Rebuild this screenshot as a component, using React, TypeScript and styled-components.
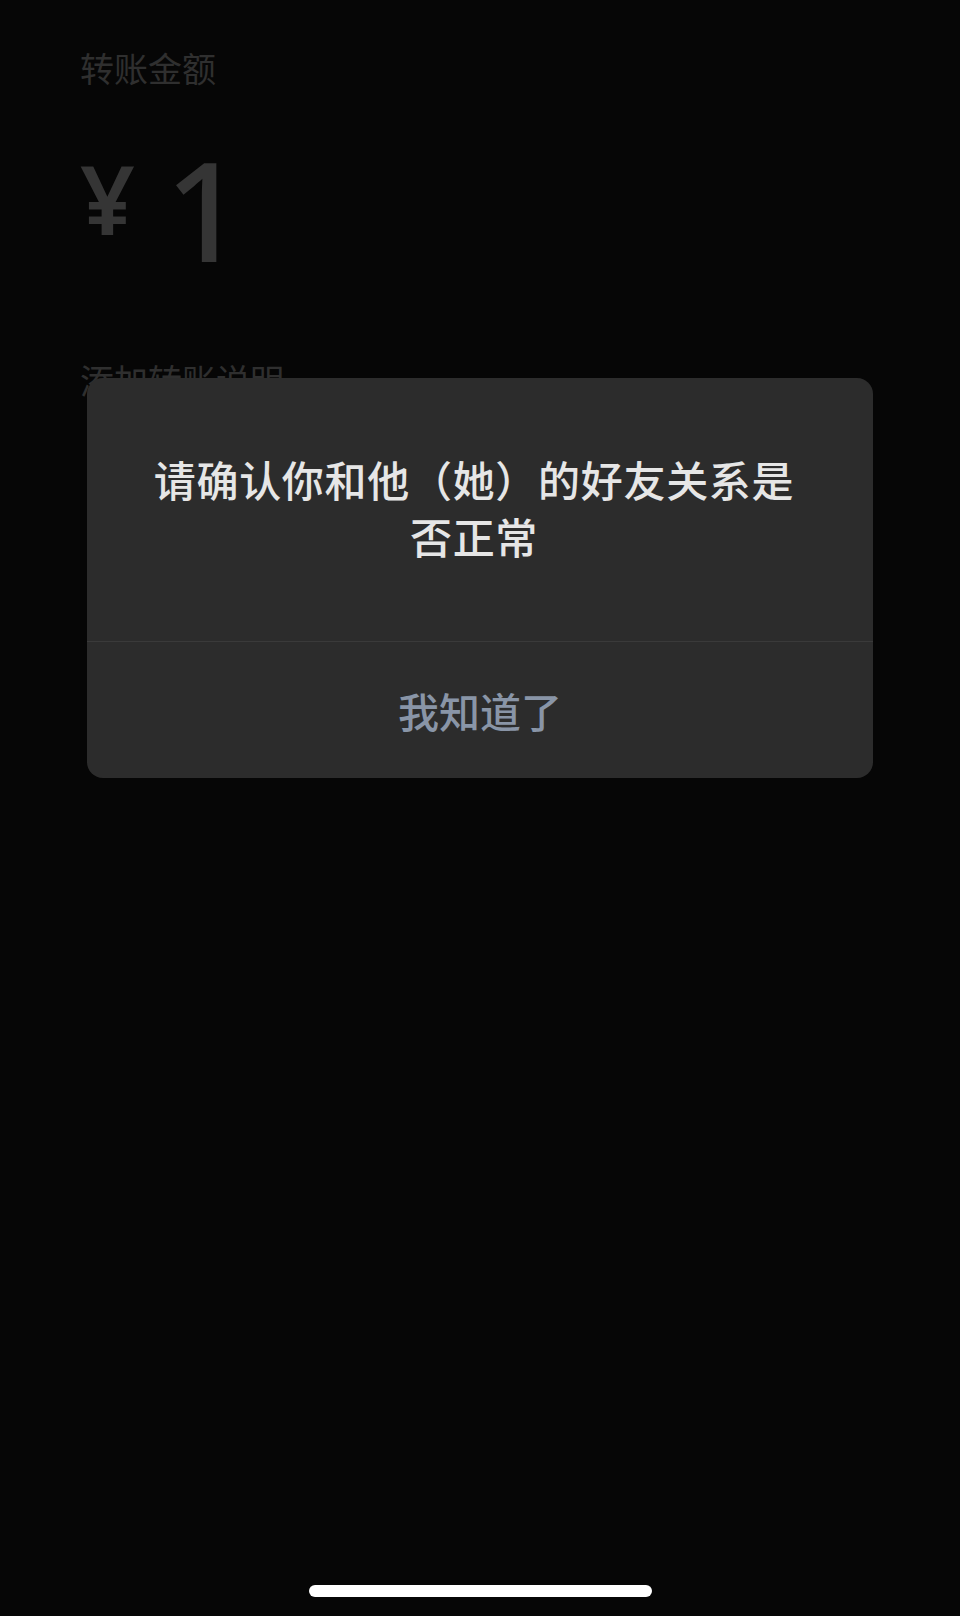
import styled, { createGlobalStyle } from "styled-components";

const GlobalStyle = createGlobalStyle`
  html, body {
    margin: 0;
    padding: 0;
    background: #060606;
  }
  body {
    font-family: "Noto Sans CJK SC", "Noto Sans", sans-serif;
  }
`;

const Screen = styled.div`
  position: relative;
  width: 960px;
  min-height: 1616px;
  display: flex;
  flex-direction: column;
  background: #060606;
  overflow: hidden;
`;

const Content = styled.div`
  display: flex;
  flex-direction: column;
  padding: 44px 0 0 80px;
  flex: 1;
`;

const Label = styled.div`
  font-size: 34px;
  line-height: 48px;
  color: #2f2f2f;
`;

const AmountRow = styled.div`
  display: flex;
  align-items: flex-start;
  gap: 30px;
  margin-top: 54px;
  color: #353535;
  font-family: "Noto Sans", "Noto Sans CJK SC", sans-serif;
  font-weight: 600;
`;

const Currency = styled.span`
  font-size: 96px;
  line-height: 100px;
  margin-top: 2px;
`;

const Digit = styled.span`
  font-size: 138px;
  line-height: 124px;
  font-weight: 500;
`;

const Remark = styled.div`
  margin-top: 86px;
  font-size: 34px;
  line-height: 48px;
  color: #2f2f2f;
`;

const Dialog = styled.div`
  position: absolute;
  top: 378px;
  left: 87px;
  width: 786px;
  border-radius: 16px;
  background: #2c2c2c;
  overflow: hidden;
  display: flex;
  flex-direction: column;
`;

const Message = styled.div`
  height: 263px;
  box-sizing: border-box;
  padding: 0 62px 6px 50px;
  display: flex;
  align-items: center;
  justify-content: center;
  text-align: center;
  font-size: 42px;
  line-height: 57px;
  letter-spacing: 0.7px;
  font-weight: 500;
  color: #e6e6e6;
`;

const Divider = styled.div`
  height: 1px;
  background: #3a3a3a;
`;

const ActionButton = styled.button`
  height: 136px;
  border: none;
  background: transparent;
  font-family: "Noto Sans CJK SC", "Noto Sans", sans-serif;
  font-size: 41px;
  font-weight: 500;
  color: #8995a7;
  padding: 0;
  cursor: pointer;
`;

const HomeBar = styled.div`
  align-self: center;
  width: 343px;
  height: 12px;
  border-radius: 6px;
  background: #ffffff;
  margin-bottom: 19px;
`;

export default function App() {
  return (
    <Screen>
      <GlobalStyle />
      <Content>
        <Label>转账金额</Label>
        <AmountRow>
          <Currency>¥</Currency>
          <Digit>1</Digit>
        </AmountRow>
        <Remark>添加转账说明</Remark>
      </Content>
      <HomeBar />
      <Dialog>
        <Message>请确认你和他（她）的好友关系是否正常</Message>
        <Divider />
        <ActionButton>我知道了</ActionButton>
      </Dialog>
    </Screen>
  );
}
